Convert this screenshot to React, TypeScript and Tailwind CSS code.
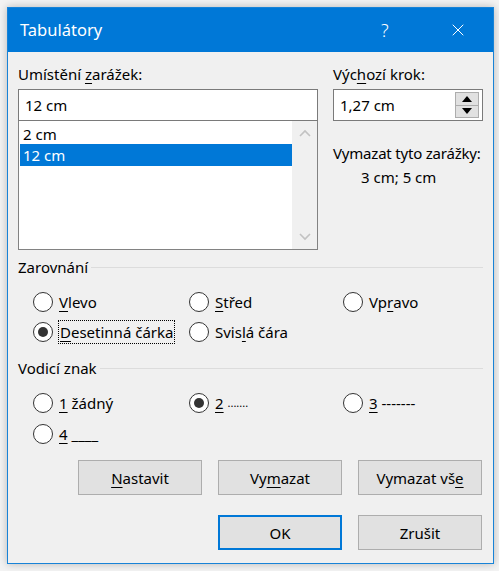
import { X } from "lucide-react";

// Dialog "Tabulátory" – Word tab stops

function Radio({ checked, children, focused }: { checked?: boolean; children: React.ReactNode; focused?: boolean }) {
  return (
    <label className="flex items-center gap-[6px] h-[24px]">
      <span className="w-[20px] h-[20px] rounded-full border border-[#333] bg-white flex items-center justify-center shrink-0">
        {checked && <span className="w-[10px] h-[10px] rounded-full bg-[#333]" />}
      </span>
      <span
        className={
          focused
            ? "border border-dotted border-black px-[1px] h-[24px] flex items-center -ml-[1px]"
            : "flex items-center"
        }
      >
        {children}
      </span>
    </label>
  );
}

function Key({ children }: { children: React.ReactNode }) {
  return <u className="underline underline-offset-[3px] decoration-1">{children}</u>;
}

function Btn({ children, def }: { children: React.ReactNode; def?: boolean }) {
  return (
    <button
      className={
        def
          ? "w-[124px] h-[35px] bg-[#e1e1e1] border-2 border-[#0078d7]"
          : "w-[124px] h-[35px] bg-[#e1e1e1] border border-[#adadad]"
      }
    >
      {children}
    </button>
  );
}

function GroupTitle({ title }: { title: string }) {
  return (
    <div className="flex items-center gap-[3px] h-[20px]">
      <span>{title}</span>
      <span className="flex-1 h-px bg-[#dcdcdc]" />
    </div>
  );
}

export default function App() {
  return (
    <div
      className="w-[499px] h-[571px] bg-[#f3f3f3] pt-[7px] pl-[7px] text-[15px] text-black leading-[20px]"
      style={{ fontFamily: '"Noto Sans", "Open Sans", sans-serif' }}
    >
      <div className="w-[487px] h-[557px] border border-[#1883d7] bg-[#f0f0f0] flex flex-col shadow-[0_0_8px_rgba(0,0,0,0.25)]">
        {/* titulek */}
        <div className="h-[44px] bg-[#0078d7] text-white flex items-center pl-[12px] shrink-0">
          <span className="text-[16.5px] flex-1">Tabulátory</span>
          <span className="text-[18px] font-light w-[10px] mr-[57px]">?</span>
          <X size={20} strokeWidth={1.2} className="mr-[25px]" />
        </div>

        {/* obsah */}
        <div className="px-[10px] pt-[12px] flex flex-col">
          <div className="flex gap-[15px]">
            <div className="w-[300px] flex flex-col">
              <div className="h-[20px]">
                Umístění <Key>z</Key>arážek:
              </div>
              <div className="mt-[5px] h-[32px] border border-[#7a7a7a] bg-white flex items-center px-[6px]">
                12 cm
              </div>
              <div className="h-[129px] border border-[#828282] border-t-0 bg-white flex">
                <div className="flex-1 pt-[3px] pl-[1px]">
                  <div className="h-[20px] px-[3px]">2 cm</div>
                  <div className="h-[22px] px-[3px] bg-[#0078d7] text-white flex items-center">12 cm</div>
                </div>
                <div className="w-[25px] bg-[#f0f0f0] flex flex-col justify-between items-center py-[8px]">
                  <svg width="12" height="8" viewBox="0 0 12 8">
                    <path d="M1 7 L6 2 L11 7" fill="none" stroke="#c2c2c2" strokeWidth="1.6" />
                  </svg>
                  <svg width="12" height="8" viewBox="0 0 12 8">
                    <path d="M1 1 L6 6 L11 1" fill="none" stroke="#c2c2c2" strokeWidth="1.6" />
                  </svg>
                </div>
              </div>
            </div>

            <div className="w-[150px] flex flex-col">
              <div className="h-[20px]">
                Výc<Key>h</Key>ozí krok:
              </div>
              <div className="mt-[5px] h-[32px] border border-[#7a7a7a] bg-white flex items-center pl-[6px] pr-[3px]">
                <span className="flex-1">1,27 cm</span>
                <div className="flex flex-col w-[24px] h-[26px] border border-[#adadad]">
                  <div className="flex-1 bg-[#e1e1e1] border-b border-[#adadad] flex items-center justify-center">
                    <svg width="10" height="6" viewBox="0 0 10 6">
                      <path d="M0 6 L5 0 L10 6 Z" fill="#000" />
                    </svg>
                  </div>
                  <div className="flex-1 bg-[#e1e1e1] flex items-center justify-center">
                    <svg width="10" height="6" viewBox="0 0 10 6">
                      <path d="M0 0 L5 6 L10 0 Z" fill="#000" />
                    </svg>
                  </div>
                </div>
              </div>
              <div className="mt-[22px] whitespace-nowrap tracking-[-0.2px]">Vymazat tyto zarážky:</div>
              <div className="mt-[4px] pl-[28px]">3 cm; 5 cm</div>
            </div>
          </div>

          <div className="mt-[7px]">
            <GroupTitle title="Zarovnání" />
          </div>
          <div className="grid grid-cols-[156px_154px_1fr] pl-[15px] mt-[13px] gap-y-[6px]">
            <Radio>
              <Key>V</Key>levo
            </Radio>
            <Radio>
              <Key>S</Key>třed
            </Radio>
            <Radio>
              Vp<Key>r</Key>avo
            </Radio>
            <Radio checked focused>
              <Key>D</Key>esetinná čárka
            </Radio>
            <Radio>
              Svis<Key>l</Key>á čára
            </Radio>
          </div>

          <div className="mt-[14px]">
            <GroupTitle title="Vodicí znak" />
          </div>
          <div className="grid grid-cols-[156px_154px_1fr] pl-[15px] mt-[13px] gap-y-[7px]">
            <Radio>
              <Key>1</Key>&nbsp;žádný
            </Radio>
            <Radio checked>
              <Key>2</Key>&nbsp;<span className="text-[11px]">.......</span>
            </Radio>
            <Radio>
              <Key>3</Key>&nbsp;-------
            </Radio>
            <Radio>
              <Key>4</Key>&nbsp;____
            </Radio>
          </div>

          <div className="flex justify-end gap-[16px] mt-[14px] pr-[1px]">
            <Btn>
              <Key>N</Key>astavit
            </Btn>
            <Btn>
              Vy<Key>m</Key>azat
            </Btn>
            <Btn>
              Vymazat vš<Key>e</Key>
            </Btn>
          </div>
          <div className="flex justify-end gap-[16px] mt-[20px] pr-[1px]">
            <Btn def>OK</Btn>
            <Btn>Zrušit</Btn>
          </div>
        </div>
      </div>
    </div>
  );
}
